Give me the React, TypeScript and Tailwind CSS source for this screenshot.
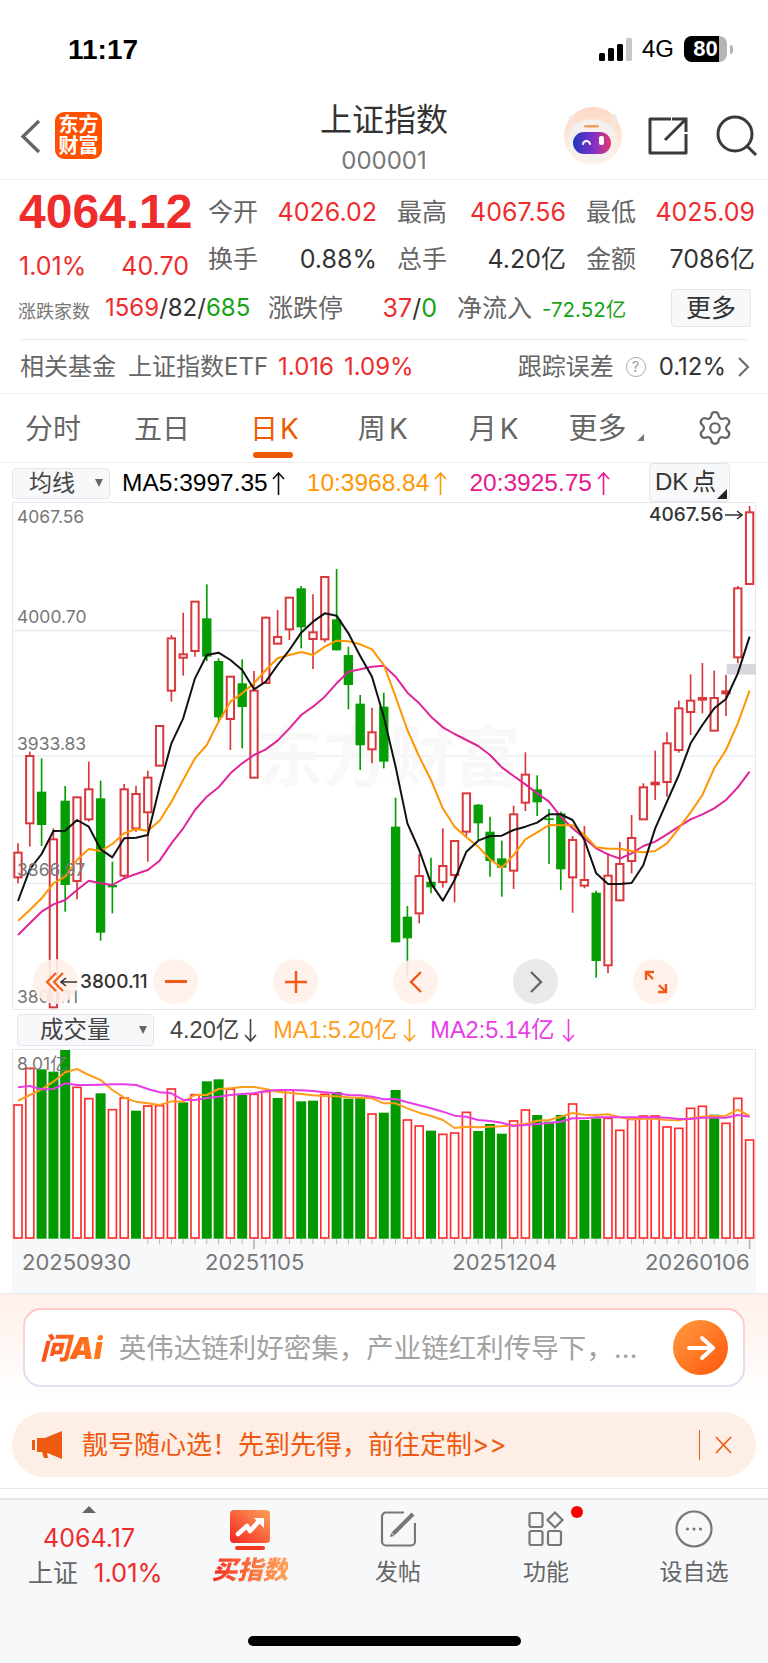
import { Settings } from "lucide-react";

const SANS = "font-['Inter','Noto_Sans_CJK_SC',sans-serif]";
const ARIAL = "font-['Liberation_Sans','Noto_Sans_CJK_SC',sans-serif]";

const RED = "#d8383c";
const GREEN = "#049e04";

// candle: [high, open/top, close/bottom, low, isUp]; units are thirds of a pixel
const candles: [number, number, number, number, number][] = [
  [1030, 1058, 1132, 1150, 1], [755, 768, 970, 1040, 1], [775, 875, 975, 1038, 0], [985, 1018, 1522, 1522, 1],
  [858, 902, 1155, 1235, 0], [890, 892, 1143, 1198, 1], [785, 868, 958, 965, 1], [842, 895, 1298, 1322, 0],
  [1085, 1155, 1162, 1240, 0], [852, 868, 1127, 1135, 1], [857, 882, 985, 995, 1], [812, 833, 937, 1085, 1],
  [678, 678, 797, 797, 1], [405, 415, 572, 605, 1], [338, 463, 473, 527, 1], [305, 305, 453, 470, 1],
  [253, 355, 470, 483, 0], [475, 483, 652, 668, 0], [528, 530, 657, 750, 1], [478, 550, 621, 745, 0],
  [513, 572, 833, 833, 1], [350, 353, 549, 549, 1], [330, 411, 431, 431, 1], [293, 293, 388, 420, 1],
  [258, 265, 382, 445, 0], [283, 397, 417, 507, 1], [228, 231, 418, 427, 1], [207, 358, 451, 451, 0],
  [440, 465, 555, 628, 0], [585, 611, 736, 810, 0], [623, 697, 748, 790, 1], [578, 620, 785, 805, 0],
  [893, 980, 1327, 1327, 0], [1218, 1250, 1315, 1430, 0], [1062, 1128, 1240, 1270, 1], [1073, 1145, 1162, 1180, 0],
  [985, 1098, 1146, 1163, 1], [1022, 1023, 1125, 1207, 1], [880, 880, 995, 1010, 1], [912, 914, 970, 1020, 0],
  [950, 995, 1083, 1130, 0], [1022, 1075, 1103, 1190, 0], [917, 943, 1112, 1167, 1], [757, 824, 908, 933, 1],
  [826, 868, 907, 948, 0], [927, 955, 960, 1092, 0], [935, 940, 1108, 1170, 0], [1008, 1020, 1132, 1238, 1],
  [978, 1140, 1157, 1165, 1], [1172, 1178, 1383, 1433, 0], [1060, 1127, 1396, 1420, 1], [1026, 1092, 1201, 1203, 1],
  [945, 1014, 1083, 1120, 1], [850, 862, 958, 958, 1], [752, 848, 853, 900, 1], [697, 730, 846, 890, 1],
  [602, 625, 750, 758, 1], [523, 602, 636, 705, 1], [489, 594, 599, 640, 1], [512, 594, 692, 692, 1],
  [525, 574, 580, 648, 1], [258, 265, 472, 490, 1], [18, 37, 252, 255, 1],
];

const ma5 = [1203, 1108, 1062, 993, 992, 960, 980, 1048, 1072, 1015, 1013, 1005, 860, 730, 655, 535, 465, 458, 480, 510, 568, 545, 495, 450, 398, 365, 340, 347, 400, 468, 530, 650, 800, 970, 1050, 1150, 1202, 1140, 1055, 1022, 1008, 1007, 990, 980, 968, 943, 943, 960, 1020, 1120, 1152, 1152, 1149, 1095, 985, 905, 825, 730, 675, 625, 597, 520, 410];
const ma10 = [1262, 1230, 1195, 1150, 1130, 1080, 1047, 1053, 1032, 1000, 987, 992, 962, 905, 840, 775, 735, 665, 605, 580, 550, 510, 475, 465, 456, 465, 440, 422, 424, 433, 448, 495, 590, 690, 770, 840, 925, 980, 1012, 1040, 1078, 1103, 1065, 1018, 997, 975, 976, 976, 1005, 1042, 1046, 1046, 1053, 1057, 1053, 1030, 985, 937, 885, 805, 750, 670, 572];
const ma20 = [1305, 1270, 1235, 1213, 1200, 1170, 1142, 1150, 1155, 1135, 1122, 1110, 1082, 1030, 985, 930, 890, 862, 820, 790, 765, 748, 722, 685, 645, 620, 590, 550, 515, 508, 500, 497, 530, 578, 610, 650, 682, 702, 720, 738, 765, 802, 828, 853, 880, 905, 950, 985, 1015, 1045, 1063, 1076, 1060, 1038, 1025, 1003, 980, 958, 943, 925, 900, 862, 815];

// volume: bar top, isUp
const volume: [number, number][] = [
  [285, 1], [175, 1], [178, 0], [185, 0], [120, 0], [232, 1], [266, 1], [250, 0], [299, 1], [264, 1], [302, 0],
  [288, 1], [287, 1], [237, 1], [277, 0], [254, 1], [214, 0], [208, 0], [237, 1], [255, 0], [253, 1], [245, 1],
  [264, 0], [240, 1], [274, 0], [272, 0], [253, 1], [246, 0], [266, 0], [264, 0], [312, 1], [308, 0], [240, 0],
  [330, 1], [348, 1], [362, 0], [373, 1], [369, 1], [307, 1], [363, 0], [342, 0], [371, 0], [333, 1], [300, 1],
  [315, 0], [335, 0], [315, 0], [282, 1], [330, 0], [325, 0], [325, 1], [361, 1], [328, 1], [318, 1], [318, 1],
  [351, 1], [355, 1], [295, 1], [289, 1], [314, 0], [340, 1], [265, 1], [390, 1],
];
const volMa1 = [272, 255, 238, 215, 187, 177, 195, 210, 240, 263, 275, 280, 285, 274, 275, 255, 255, 237, 235, 231, 231, 237, 245, 248, 252, 256, 258, 259, 262, 263, 265, 280, 280, 295, 308, 318, 330, 354, 350, 352, 350, 349, 345, 342, 332, 330, 320, 309, 314, 315, 313, 322, 328, 326, 326, 330, 331, 325, 320, 318, 317, 299, 318];
const volMa2 = [232, 228, 238, 237, 220, 225, 225, 224, 223, 223, 225, 237, 247, 250, 270, 270, 264, 260, 255, 252, 250, 243, 240, 240, 241, 243, 247, 250, 255, 256, 260, 268, 267, 277, 286, 295, 305, 317, 320, 330, 333, 338, 348, 345, 342, 339, 335, 325, 325, 322, 322, 322, 322, 322, 322, 323, 327, 327, 323, 323, 323, 315, 320];

const xAt = (i: number) => 54 + 35.4 * i;
const points = (ys: number[]) => ys.map((y, i) => `${xAt(i).toFixed(1)},${y}`).join(" ");

function Candle({ c, i }: { c: [number, number, number, number, number]; i: number }) {
  const x = xAt(i);
  const color = c[4] ? RED : GREEN;
  return (
    <g>
      <line x1={x} x2={x} y1={c[0]} y2={c[3]} stroke={color} strokeWidth={5} />
      {c[4] ? (
        <rect x={x - 11} y={c[1]} width={22} height={Math.max(c[2] - c[1], 2)} fill="#fff" stroke={color} strokeWidth={6} />
      ) : (
        <rect x={x - 14} y={c[1]} width={28} height={Math.max(c[2] - c[1], 5)} fill={color} />
      )}
    </g>
  );
}

// tall thin trend arrow used next to the MA readouts
function TrendArrow({ up, color, className }: { up?: boolean; color: string; className?: string }) {
  return (
    <svg className={className} width="13" height="23" viewBox="0 0 13 23" fill="none" stroke={color} strokeWidth="1.6">
      <path d={up ? "M6.5 1v22M1 7l5.5-6L12 7" : "M6.5 0v22M1 16l5.5 6 5.5-6"} />
    </svg>
  );
}

function CircleBtn({ gray, children }: { gray?: boolean; children: React.ReactNode }) {
  return (
    <div className={`w-[45px] h-[45px] rounded-full flex items-center justify-center ${gray ? "bg-[#e9e9e9]" : "bg-[#fff0e9]/90"}`}>
      {children}
    </div>
  );
}

function AxisLabel({ top, children }: { top: string; children: React.ReactNode }) {
  return <div className={`absolute left-[5px] ${top} text-[17.5px] leading-[16px] text-[#777] ${SANS}`}>{children}</div>;
}

function KlineChart() {
  return (
    <div className="relative ml-3 w-[744px] h-[508px] ring-1 ring-inset ring-[#e6e8ee] overflow-hidden">
      <svg className="absolute inset-0 w-full h-full" viewBox="36 6 2232 1524">
        {[392, 768, 1150].map((y) => (
          <line key={y} x1={36} x2={2268} y1={y} y2={y} stroke="#eceef5" strokeWidth={5} />
        ))}
      </svg>
      <div className={`absolute left-[245px] top-[222px] flex text-[66px] leading-none font-bold text-[#f8f8f8] ${SANS}`}>东方财富</div>
      <svg className="absolute inset-0 w-full h-full" viewBox="36 6 2232 1524">
        <rect x={2180} y={492} width={88} height={32} fill="#d6d8dd" />
        {candles.map((c, i) => (
          <Candle key={i} c={c} i={i} />
        ))}
        <polyline points={points(ma20)} fill="none" stroke="#e0249a" strokeWidth={6} strokeLinejoin="round" />
        <polyline points={points(ma10)} fill="none" stroke="#ff9500" strokeWidth={6} strokeLinejoin="round" />
        <polyline points={points(ma5)} fill="none" stroke="#111" strokeWidth={6} strokeLinejoin="round" />
      </svg>

      <AxisLabel top="top-[7px]">4067.56</AxisLabel>
      <AxisLabel top="top-[107px]">4000.70</AxisLabel>
      <AxisLabel top="top-[234px]">3933.83</AxisLabel>
      <AxisLabel top="top-[360px]">3866.97</AxisLabel>
      <AxisLabel top="top-[487px]">3800.11</AxisLabel>

      <div className={`absolute left-[637px] top-[6px] flex items-center text-[19px] leading-[14px] font-medium text-[#333] ${SANS}`}>
        4067.56
        <svg className="ml-[2px]" width="18" height="10" viewBox="0 0 18 10" fill="none" stroke="#333" strokeWidth="1.6">
          <path d="M0 5h17M12 1l5 4-5 4" />
        </svg>
      </div>

      <div className="absolute left-[21px] top-[457px] flex gap-[75px]">
        <CircleBtn>
          <svg width="26" height="26" viewBox="0 0 26 26" fill="none" stroke="#f4601a" strokeWidth="2.2">
            <path d="M13 4 4 13l9 9M20 4l-9 9 9 9" />
          </svg>
        </CircleBtn>
        <CircleBtn>
          <div className="w-[22px] h-[2.5px] bg-[#f05a14]" />
        </CircleBtn>
        <CircleBtn>
          <svg width="24" height="24" viewBox="0 0 24 24" stroke="#f05a14" strokeWidth="2.4">
            <path d="M1 12h22M12 1v22" />
          </svg>
        </CircleBtn>
        <CircleBtn>
          <svg width="14" height="24" viewBox="0 0 14 24" fill="none" stroke="#f05a14" strokeWidth="2.4">
            <path d="M12 2 2 12l10 10" />
          </svg>
        </CircleBtn>
        <CircleBtn gray>
          <svg width="14" height="24" viewBox="0 0 14 24" fill="none" stroke="#666" strokeWidth="2.4">
            <path d="m2 2 10 10L2 22" />
          </svg>
        </CircleBtn>
        <CircleBtn>
          <svg width="24" height="24" viewBox="0 0 24 24" fill="none" stroke="#f05a14" strokeWidth="2.4">
            <path d="M2 10V2h8M2 2l7 7M22 14v8h-8M22 22l-7-7" />
          </svg>
        </CircleBtn>
      </div>
      <div className={`absolute left-[48px] top-[473px] flex items-center text-[19px] leading-[14px] font-medium text-[#333] ${SANS}`}>
        <svg className="mr-[3px]" width="17" height="10" viewBox="0 0 17 10" fill="none" stroke="#333" strokeWidth="1.6">
          <path d="M17 5H1M6 1 1 5l5 4" />
        </svg>
        3800.11
      </div>
    </div>
  );
}

function VolumeChart() {
  return (
    <div className="relative ml-3 w-[744px] h-[190px] ring-1 ring-inset ring-[#e6e8ee] overflow-hidden">
      <svg className="absolute inset-0 w-full h-full" viewBox="36 117 2232 570">
        {volume.map(([top, up], i) =>
          up ? (
            <rect key={i} x={xAt(i) - 12} y={top} width={24} height={686 - top - 2} fill="#fff" stroke="#ff2e2e" strokeWidth={5} />
          ) : (
            <rect key={i} x={xAt(i) - 15} y={top} width={30} height={686 - top} fill="#009a00" />
          )
        )}
        <polyline points={points(volMa1)} fill="none" stroke="#ff9d1c" strokeWidth={6} strokeLinejoin="round" />
        <polyline points={points(volMa2)} fill="none" stroke="#e63de6" strokeWidth={6} strokeLinejoin="round" />
      </svg>
      <div className={`absolute left-[5px] top-[6px] text-[17.5px] leading-[18px] text-[#777] ${SANS}`}>8.01亿</div>
    </div>
  );
}

function Stat({ label, value, red }: { label: string; value: string; red?: boolean }) {
  return (
    <div className="flex w-[169px] items-center justify-between">
      <span className="text-[#666]">{label}</span>
      <span className={red ? "text-[#ee2c2c]" : "text-[#333]"}>{value}</span>
    </div>
  );
}

function NavItem({ icon, label }: { icon: React.ReactNode; label: string }) {
  return (
    <div className="flex flex-col items-center">
      <div className="h-[38px] flex items-center">{icon}</div>
      <span className="mt-[9px] text-[23px] leading-[30px] text-[#666]">{label}</span>
    </div>
  );
}

export default function App() {
  return (
    <div className={`relative w-[768px] h-[1663px] bg-white overflow-hidden ${SANS}`}>
      {/* status bar */}
      <div className="h-[85px] flex items-start justify-between pl-[68px] pr-[35px] pt-[34px]">
        <span className={`text-[28px] leading-[32px] font-bold text-black ${ARIAL}`}>11:17</span>
        <div className="flex items-center mt-[1px]">
          <svg width="33" height="23" viewBox="0 0 33 23">
            <rect x="0" y="15" width="6" height="8" rx="1.5" fill="#000" />
            <rect x="9" y="10" width="6" height="13" rx="1.5" fill="#000" />
            <rect x="18" y="6" width="6" height="17" rx="1.5" fill="#000" />
            <rect x="27" y="0" width="6" height="23" rx="1.5" fill="#c8c8c8" />
          </svg>
          <span className={`ml-[10px] text-[24px] leading-[28px] font-medium text-black ${ARIAL}`}>4G</span>
          <div className="ml-[10px] flex items-center gap-[3px]">
            <div className="relative w-[43px] h-[26px] rounded-[8px] overflow-hidden bg-[#b4b4b4]">
              <div className="absolute inset-y-0 left-0 w-[35px] bg-black" />
              <span className={`absolute inset-0 text-center text-[22px] leading-[26px] font-bold text-white ${ARIAL}`}>80</span>
            </div>
            <div className="w-[3px] h-[9px] rounded-r-full bg-[#b4b4b4]" />
          </div>
        </div>
      </div>

      {/* header */}
      <div className="relative h-[95px] border-b border-[#eeeeee]">
        <div className="flex h-full items-start">
          <svg className="ml-[20px] mt-[34px]" width="21" height="35" viewBox="0 0 21 35" fill="none" stroke="#666" strokeWidth="3.4">
            <path d="M19 2 3 17.5 19 33" />
          </svg>
          <div className="ml-[14px] mt-[27px] w-[47px] h-[47px] rounded-[9px] bg-[#ff5000] flex flex-col items-center justify-center text-white text-[20px] leading-[21px] font-bold">
            <span>东方</span>
            <span>财富</span>
          </div>
          <div className="ml-auto mr-[10px] mt-[22px] flex items-start">
            <svg width="58" height="58" viewBox="0 0 58 58">
              <defs>
                <linearGradient id="visor" x1="0" x2="1" y1="0" y2="0">
                  <stop offset="0" stopColor="#2038c0" />
                  <stop offset="0.55" stopColor="#8030c8" />
                  <stop offset="1" stopColor="#e8386a" />
                </linearGradient>
                <linearGradient id="halo" x1="0" x2="0" y1="0" y2="1">
                  <stop offset="0" stopColor="#fdd8c6" />
                  <stop offset="1" stopColor="#fff3ec" />
                </linearGradient>
              </defs>
              <circle cx="29" cy="29" r="29" fill="url(#halo)" />
              <path d="M47 19c3-2 5-6 4-10M11 19c-3-2-5-6-4-9" stroke="#f1e8e4" strokeWidth="3.5" fill="none" strokeLinecap="round" />
              <ellipse cx="28" cy="33" rx="24" ry="21" fill="#f4f1ef" />
              <rect x="20" y="18" width="15" height="2.5" rx="1.2" fill="#f2a25e" />
              <rect x="9" y="25" width="38" height="22" rx="11" fill="url(#visor)" />
              <path d="M19 37c1-4 6-4 7 0" stroke="#fff" strokeWidth="2" fill="none" strokeLinecap="round" />
              <rect x="35" y="29" width="5" height="9" rx="2" fill="#fff" />
            </svg>
            <svg className="ml-[26px] mt-[10px]" width="40" height="38" viewBox="0 0 40 38" fill="none" stroke="#3a3a3a" strokeWidth="3">
              <path d="M23 2H2v34h36V17" strokeLinejoin="round" />
              <path d="M17 23 38 2M24 2h14v13" />
            </svg>
            <svg className="ml-[28px] mt-[8px]" width="42" height="42" viewBox="0 0 42 42" fill="none" stroke="#3a3a3a" strokeWidth="3">
              <circle cx="19" cy="19" r="17" />
              <path d="m31 31 9 9" />
            </svg>
          </div>
        </div>
        <div className="absolute inset-x-0 top-[15px] flex flex-col items-center pointer-events-none">
          <span className="text-[32px] leading-[40px] text-[#333]">上证指数</span>
          <span className="mt-[6px] text-[24px] leading-[30px] text-[#777]">000001</span>
        </div>
      </div>

      {/* quote */}
      <div className="pt-[9px] text-[25px] leading-[32px]">
        <div className="flex pl-[19px] h-[46px] items-center">
          <div className={`w-[172px] text-[48px] leading-none font-bold text-[#ee2c2c] ${ARIAL}`}>4064.12</div>
          <div className="ml-[17px] flex gap-[20px]">
            <Stat label="今开" value="4026.02" red />
            <Stat label="最高" value="4067.56" red />
            <Stat label="最低" value="4025.09" red />
          </div>
        </div>
        <div className="flex pl-[19px] h-[46px] items-center">
          <div className="w-[170px] mr-[2px] pt-[16px] flex justify-between text-[#ee2c2c]">
            <span>1.01%</span>
            <span>40.70</span>
          </div>
          <div className="ml-[17px] flex gap-[20px] pt-[2px]">
            <Stat label="换手" value="0.88%" />
            <Stat label="总手" value="4.20亿" />
            <Stat label="金额" value="7086亿" />
          </div>
        </div>
        <div className="flex pl-[18px] h-[54px] items-center">
          <span className="w-[87px] pt-[8px] text-[18px] text-[#777]">涨跌家数</span>
          <span className="w-[163px] text-[24px] text-[#333] whitespace-nowrap">
            <span className="text-[#ee2c2c]">1569</span>/82/<span className="text-[#16a316]">685</span>
          </span>
          <span className="w-[75px] text-[#666]">涨跌停</span>
          <span className="w-[94px] text-right text-[#333]">
            <span className="text-[#ee2c2c]">37</span>/<span className="text-[#16a316]">0</span>
          </span>
          <span className="ml-[20px] text-[#666]">净流入</span>
          <span className="ml-[10px] pt-[4px] text-[20.5px] text-[#16a316] whitespace-nowrap">-72.52亿</span>
          <div className="ml-auto mr-[17px] w-[80px] h-[38px] flex items-center justify-center rounded-[4px] border border-[#e3e5ea] bg-[#f7f8fa] text-[#333]">
            更多
          </div>
        </div>
        <div className="mx-[20px] mt-[4px] border-t border-[#ececec]" />
        <div className="flex h-[54px] items-center pl-[20px] text-[24px] text-[#666] border-b border-[#f0f0f0]">
          <span>相关基金</span>
          <span className="ml-[12px]">上证指数ETF</span>
          <span className="ml-[10px] text-[#ee2c2c]">1.016</span>
          <span className="ml-[10px] text-[#ee2c2c]">1.09%</span>
          <span className="ml-auto">跟踪误差</span>
          <span className="ml-[12px] w-[20px] h-[20px] rounded-full border border-[#aaa] text-[14px] leading-[18px] text-center text-[#999]">?</span>
          <span className="ml-[13px] text-[#333]">0.12%</span>
          <svg className="ml-[11px] mr-[18px]" width="13" height="22" viewBox="0 0 13 22" fill="none" stroke="#666" strokeWidth="2">
            <path d="m2 2 9 9-9 9" />
          </svg>
        </div>
      </div>

      {/* period tabs */}
      <div className="relative flex h-[69px] items-start text-[28px] leading-[36px] text-[#666] pt-[17px] border-b border-[#f0f0f0]">
        <span className="ml-[25px]">分时</span>
        <span className="ml-[53px]">五日</span>
        <div className="ml-[60px] flex flex-col items-start text-[#ee5a00]">
          <span>日<span className="ml-[2px]">K</span></span>
          <div className="mt-[5px] ml-[3px] w-[40px] h-[6px] rounded-full bg-[#ee5a00]" />
        </div>
        <span className="ml-[59px]">周<span className="ml-[3px]">K</span></span>
        <span className="ml-[61px]">月<span className="ml-[3px]">K</span></span>
        <span className="ml-[50px] text-[29px]">更多</span>
        <div className="ml-[10px] mt-[23px] w-0 h-0 border-l-[7px] border-l-transparent border-b-[7px] border-b-[#777]" />
        <Settings className="ml-[52px] -mt-[2px]" size={38} strokeWidth={1.4} color="#666" />
      </div>

      {/* indicator bar */}
      <div className={`flex h-[39px] items-center pl-[12px] pt-[1px] text-[24.5px] leading-[30px] ${ARIAL}`}>
        <div className="flex h-[31px] w-[98px] items-center rounded-[4px] border border-[#e3e6ee] bg-[#f7f8fa] pl-[16px] text-[23px] text-[#444]">
          均线
          <div className="ml-[20px] w-0 h-0 border-x-[4px] border-x-transparent border-t-[8px] border-t-[#666]" />
        </div>
        <span className="ml-[12px] text-black">MA5:3997.35</span>
        <TrendArrow up color="#111" className="ml-[4px]" />
        <span className="ml-[22px] text-[#ff9800]">10:3968.84</span>
        <TrendArrow up color="#ff9800" className="ml-[5px]" />
        <span className="ml-[22px] text-[#e6198f]">20:3925.75</span>
        <TrendArrow up color="#e6198f" className="ml-[5px]" />
        <div className="relative ml-[39px] -mt-[2px] flex h-[39px] w-[81px] items-center rounded-[4px] border border-[#e3e6ee] bg-[#f7f8fa] pl-[5px] text-[24px] text-[#333]">
          DK<span className="ml-[4px]">点</span>
          <div className="absolute right-[2px] bottom-[2px] w-0 h-0 border-l-[10px] border-l-transparent border-b-[10px] border-b-[#222]" />
        </div>
      </div>

      <KlineChart />

      {/* volume bar */}
      <div className={`flex h-[39px] items-center pl-[17px] pt-[1px] text-[23.5px] leading-[30px] ${ARIAL}`}>
        <div className="flex h-[32px] w-[137px] items-center rounded-[4px] border border-[#e3e6ee] bg-[#f7f8fa] pl-[22px] text-[#444]">
          成交量
          <div className="ml-[28px] w-0 h-0 border-x-[4px] border-x-transparent border-t-[8px] border-t-[#666]" />
        </div>
        <span className="ml-[16px] text-[#444]">4.20亿</span>
        <TrendArrow color="#444" className="ml-[5px]" />
        <span className="ml-[16px] text-[#ff9d1c]">MA1:5.20亿</span>
        <TrendArrow color="#ff9d1c" className="ml-[6px]" />
        <span className="ml-[14px] text-[#e63de6]">MA2:5.14亿</span>
        <TrendArrow color="#e63de6" className="ml-[8px]" />
      </div>

      <VolumeChart />

      {/* date axis */}
      <div className={`relative ml-3 w-[744px] h-[54px] bg-[#f7f8fa] text-[22px] leading-[28px] text-[#777] ${SANS}`}>
        <svg className="absolute left-0 top-0 w-full h-[10px]" viewBox="36 0 2232 30">
          {candles.map((_, i) =>
            i < 11 ? null : <line key={i} x1={xAt(i)} x2={xAt(i)} y1={0} y2={i === 20 || i === 41 || i === 62 ? 30 : 16} stroke="#b8b8b8" strokeWidth={i === 20 || i === 41 || i === 62 ? 5 : 3} />
          )}
        </svg>
        <div className="flex pt-[9px]">
          <span className="ml-[10px]">20250930</span>
          <span className="ml-[74px]">20251105</span>
          <span className="ml-[148px]">20251204</span>
          <span className="ml-[88px]">20260106</span>
        </div>
      </div>

      {/* ask box + promo banner */}
      <div className="border-t border-[#e8eaf2] h-[195px] pt-[14px] bg-linear-to-b from-[#fff0ea] to-white to-55%">
        <div className="mx-[23px] h-[79px] rounded-[18px] p-[2px] bg-linear-to-b from-[#ffc9c4] to-[#dfe4f5]">
          <div className="flex h-full items-center rounded-[16px] bg-white pl-[15px]">
            <span className="text-[30px] leading-none font-black italic text-transparent bg-clip-text bg-linear-to-r from-[#f8501a] to-[#ff7a1e] whitespace-nowrap">问Ai</span>
            <span className="ml-[16px] pt-[2px] text-[27.5px] text-[#a3a3a3] whitespace-nowrap">英伟达链利好密集，产业链红利传导下，…</span>
            <div className="ml-auto mr-[15px] w-[55px] h-[55px] rounded-full flex items-center justify-center bg-linear-to-br from-[#ff9a3c] to-[#ff5200]">
              <svg width="30" height="26" viewBox="0 0 30 26" fill="none" stroke="#fff" strokeWidth="4" strokeLinecap="round" strokeLinejoin="round">
                <path d="M3 13h24M16 3l11 10-11 10" />
              </svg>
            </div>
          </div>
        </div>
        <div className="mx-[12px] mt-[25px] h-[65px] rounded-full bg-[#fdeee6] flex items-center pl-[20px] text-[#ee5a0f]">
          <svg width="31" height="28" viewBox="0 0 31 28" fill="#ee5a0f">
            <path d="M0 9h3v10H0zM5 7h8L30 0v28L13 21H5zM10 21h5l1 6h-4z" />
          </svg>
          <span className="ml-[19px] text-[26px] whitespace-nowrap">靓号随心选！先到先得，前往定制&gt;&gt;</span>
          <div className="ml-auto h-[30px] border-l border-[#ee5a0f]" />
          <svg className="ml-[15px] mr-[24px]" width="17" height="18" viewBox="0 0 17 18" stroke="#ee5a0f" strokeWidth="1.6">
            <path d="m1 1 15 16M16 1 1 17" />
          </svg>
        </div>
      </div>

      <div className="h-[10px] bg-white border-t border-[#e8eaf2]" />

      {/* bottom nav */}
      <div className="relative h-[165px] border-t-2 border-[#e8e8e8] bg-[#f7f8fa] grid grid-cols-[148px_148px_148px_148px_148px] pl-[28px] pt-[10px]">
        <div className="-mt-[4px] flex flex-col items-start whitespace-nowrap">
          <div className="ml-[54px] w-0 h-0 border-x-[7px] border-x-transparent border-b-[7px] border-b-[#666]" />
          <span className="ml-[15px] mt-[10px] text-[25px] leading-[30px] text-[#ee2c2c]">4064.17</span>
          <div className="mt-[5px] flex text-[25px] leading-[30px]">
            <span className="text-[#666]">上证</span>
            <span className="ml-[16px] text-[25.5px] text-[#ee2c2c]">1.01%</span>
          </div>
        </div>
        <div className="flex flex-col items-center">
          <svg width="40" height="40" viewBox="0 0 40 40">
            <defs>
              <linearGradient id="buy" x1="0" x2="1" y1="1" y2="0">
                <stop offset="0" stopColor="#f3261f" />
                <stop offset="1" stopColor="#ffa25a" />
              </linearGradient>
            </defs>
            <rect x="0" y="0" width="40" height="33" rx="4" fill="url(#buy)" />
            <path d="M8 24l9-8 3 5 9-10" stroke="#fff" strokeWidth="4.5" fill="none" strokeLinecap="round" strokeLinejoin="round" />
            <path d="M24 8h10v10z" fill="#fff" />
            <rect x="5" y="36" width="30" height="4" rx="2" fill="#f3361f" />
          </svg>
          <span className="mt-[7px] text-[25.5px] leading-[26px] font-black italic text-transparent bg-clip-text bg-linear-to-r from-[#f3261f] to-[#ffa25a]">买指数</span>
        </div>
        <NavItem
          label="发帖"
          icon={
            <svg width="36" height="36" viewBox="0 0 36 36" fill="none" stroke="#777" strokeWidth="2.2">
              <path d="M24 1.5H6a4 4 0 0 0-4 4v25a4 4 0 0 0 4 4h25a4 4 0 0 0 4-4V12" />
              <path d="M13 23 33 3" strokeWidth="4" />
              <path d="m10 26 1-4 3 3z" fill="#777" stroke="none" />
            </svg>
          }
        />
        <NavItem
          label="功能"
          icon={
            <svg width="36" height="36" viewBox="0 0 36 36" fill="none" stroke="#777" strokeWidth="2.2">
              <rect x="1.5" y="2" width="13" height="14" rx="2" />
              <path d="M27 1.5 34.5 9 27 16.5 19.5 9z" />
              <rect x="1.5" y="20" width="13" height="14" rx="2" />
              <rect x="20" y="20" width="13" height="14" rx="2" />
            </svg>
          }
        />
        <NavItem
          label="设自选"
          icon={
            <svg width="38" height="38" viewBox="0 0 38 38" fill="none" stroke="#777" strokeWidth="2.2">
              <circle cx="19" cy="19" r="17.5" />
              <circle cx="12.5" cy="19" r="1.6" fill="#777" stroke="none" />
              <circle cx="19" cy="19" r="1.6" fill="#777" stroke="none" />
              <circle cx="25.5" cy="19" r="1.6" fill="#777" stroke="none" />
            </svg>
          }
        />
        {/* notification dot over the 功能 tab */}
        <div className="absolute left-[571px] top-[6px] w-[12px] h-[12px] rounded-full bg-[#f80000]" />
        <div className="absolute left-[248px] top-[136px] w-[273px] h-[10px] rounded-full bg-black" />
      </div>
    </div>
  );
}
